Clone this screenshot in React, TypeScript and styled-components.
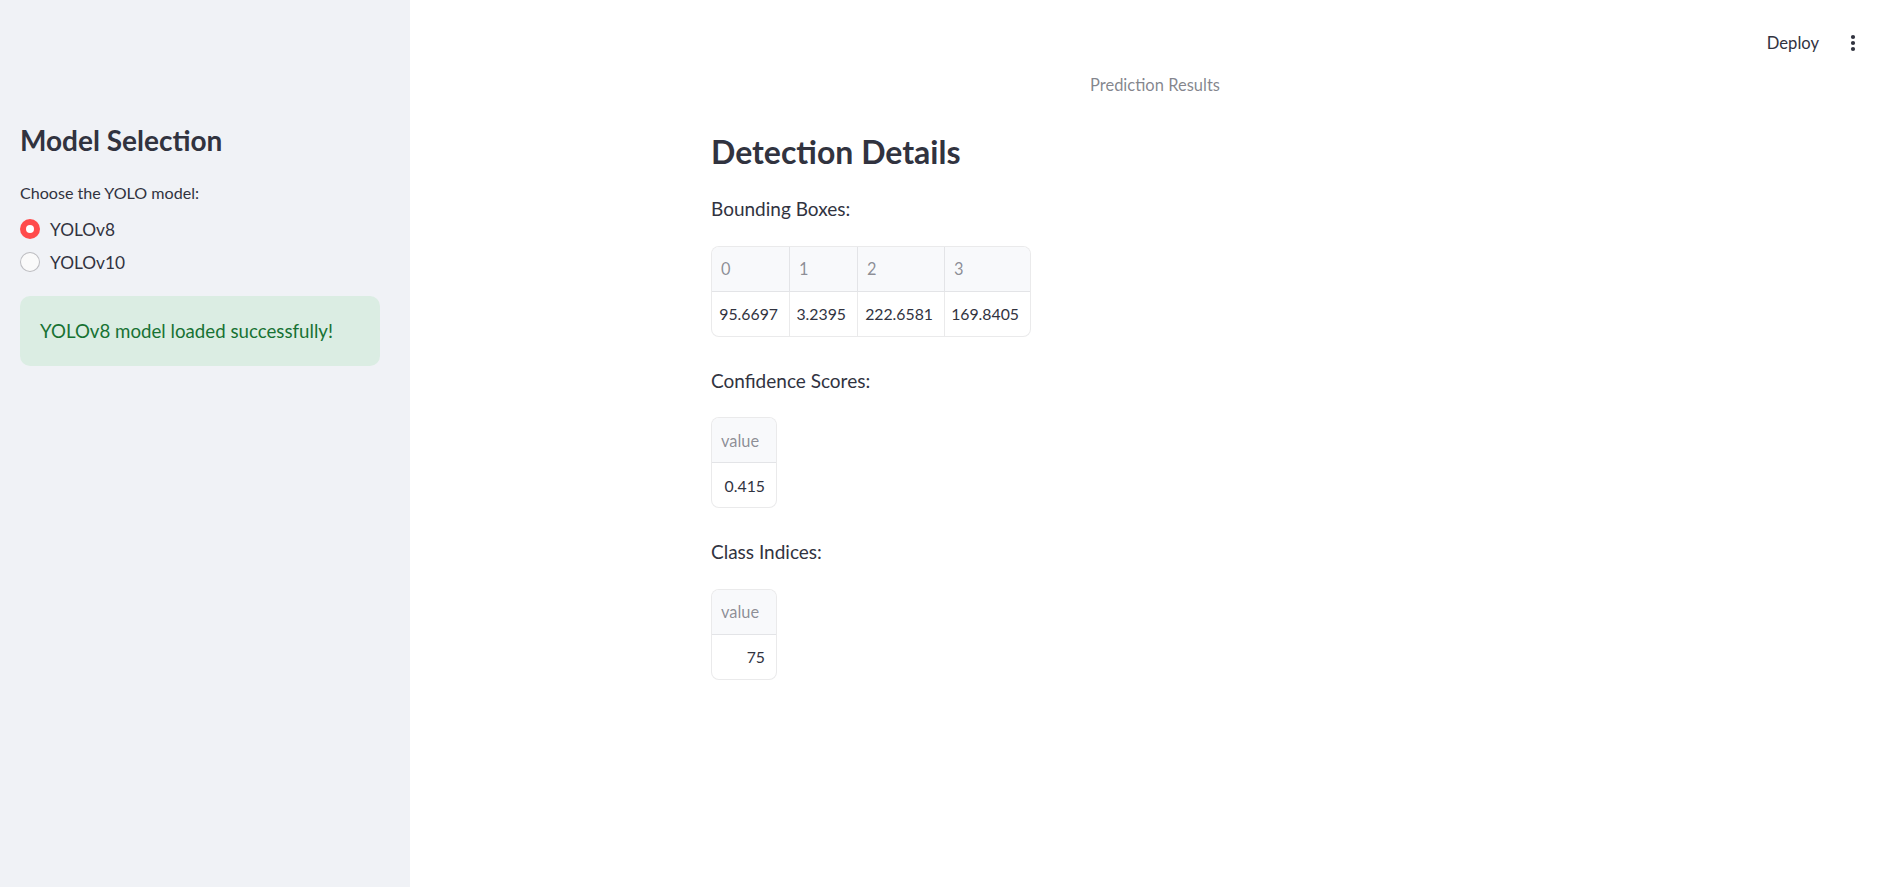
import React from "react";
import styled, { createGlobalStyle } from "styled-components";

const FONT = `"Source Sans Pro", Lato, "Noto Sans", sans-serif`;

const Global = createGlobalStyle`
  html, body { margin: 0; padding: 0; background: #ffffff; }
  body { font-family: ${FONT}; color: #31333f; -webkit-font-smoothing: antialiased; }
  * { box-sizing: border-box; }
`;

const Shell = styled.div`
  display: flex;
  min-height: 887px;
`;

const Sidebar = styled.aside`
  width: 410px;
  flex: 0 0 410px;
  background: #f0f2f6;
  padding: 124px 30px 0 20px;
  display: flex;
  flex-direction: column;
`;

const SideHeading = styled.h2`
  margin: 0;
  font-size: 28px;
  line-height: 1.2;
  font-weight: 700;
  color: #31333f;
`;

const FieldLabel = styled.div`
  margin-top: 22px;
  font-size: 16.1px;
  line-height: 1.6;
  color: #31333f;
`;

const RadioGroup = styled.div`
  margin-top: 10px;
  display: flex;
  flex-direction: column;
  gap: 5px;
`;

const RadioRow = styled.label`
  display: flex;
  align-items: center;
  height: 28px;
  gap: 10px;
  font-size: 17.3px;
  color: #31333f;
  cursor: pointer;
`;

const RadioDot = styled.span<{ $checked?: boolean }>`
  width: 20px;
  height: 20px;
  border-radius: 50%;
  flex: 0 0 20px;
  background: ${(p) => (p.$checked ? "#ff4b4b" : "#fafafa")};
  border: ${(p) => (p.$checked ? "none" : "1px solid rgba(49,51,63,0.3)")};
  display: flex;
  align-items: center;
  justify-content: center;
  &::after {
    content: "";
    display: ${(p) => (p.$checked ? "block" : "none")};
    width: 8px;
    height: 8px;
    border-radius: 50%;
    background: #ffffff;
  }
`;

const SuccessBox = styled.div`
  margin-top: 20px;
  height: 70px;
  border-radius: 10px;
  background: #dbede3;
  color: #177233;
  padding: 0 20px;
  display: flex;
  align-items: center;
  font-size: 18.7px;
`;

const Main = styled.main`
  flex: 1;
  display: flex;
  flex-direction: column;
`;

const Toolbar = styled.header`
  height: 68px;
  padding: 18px 30px 0 0;
  display: flex;
  justify-content: flex-end;
  align-items: center;
  gap: 17px;
`;

const DeployButton = styled.button`
  border: none;
  background: transparent;
  font-family: ${FONT};
  font-size: 16.6px;
  color: #31333f;
  padding: 0;
  cursor: pointer;
`;

const MenuButton = styled.button`
  border: none;
  background: transparent;
  padding: 0;
  width: 34px;
  height: 34px;
  display: flex;
  align-items: center;
  justify-content: center;
  cursor: pointer;
`;

const Content = styled.div`
  width: 888px;
  margin: 0 auto;
  display: flex;
  flex-direction: column;
  align-items: flex-start;
`;

const Caption = styled.div`
  margin-top: 4px;
  align-self: stretch;
  text-align: center;
  font-size: 16.5px;
  line-height: 27px;
  color: rgba(49, 51, 63, 0.6);
`;

const MainHeading = styled.h3`
  margin: 34px 0 0 0;
  font-size: 32px;
  line-height: 1.2;
  font-weight: 700;
  color: #31333f;
`;

const SectionLabel = styled.p<{ $first?: boolean }>`
  margin: ${(p) => (p.$first ? "23px" : "29px")} 0 21px 0;
  font-size: 19px;
  line-height: 30.4px;
  color: #31333f;
`;

const Grid = styled.div<{ $cols: string }>`
  display: grid;
  grid-template-columns: ${(p) => p.$cols};
  border: 1px solid rgba(49, 51, 63, 0.1);
  border-radius: 8px;
  overflow: hidden;
  background: #ffffff;
`;

const HeadCell = styled.div<{ $last?: boolean }>`
  height: 45px;
  background: #f8f9fb;
  border-bottom: 1px solid rgba(49, 51, 63, 0.1);
  border-right: ${(p) => (p.$last ? "none" : "1px solid rgba(49,51,63,0.1)")};
  display: flex;
  align-items: center;
  padding-left: 9px;
  font-size: 16.4px;
  color: rgba(49, 51, 63, 0.55);
`;

const BodyCell = styled.div<{ $last?: boolean }>`
  height: 44px;
  border-right: ${(p) => (p.$last ? "none" : "1px solid rgba(49,51,63,0.1)")};
  display: flex;
  align-items: center;
  justify-content: flex-end;
  padding-right: 11px;
  font-size: 15.8px;
  color: #31333f;
`;

type TableProps = { headers: string[]; values: string[]; widths: number[] };

const DataTable = ({ headers, values, widths }: TableProps) => (
  <Grid $cols={widths.map((w) => `${w}px`).join(" ")}>
    {headers.map((h, i) => (
      <HeadCell key={"h" + i} $last={i === headers.length - 1}>
        {h}
      </HeadCell>
    ))}
    {values.map((v, i) => (
      <BodyCell key={"v" + i} $last={i === values.length - 1}>
        {v}
      </BodyCell>
    ))}
  </Grid>
);

const Kebab = () => (
  <svg width="6" height="18" viewBox="0 0 6 18">
    <circle cx="3" cy="3" r="2.1" fill="#31333f" />
    <circle cx="3" cy="9" r="2.1" fill="#31333f" />
    <circle cx="3" cy="15" r="2.1" fill="#31333f" />
  </svg>
);

export default function App() {
  return (
    <>
      <Global />
      <Shell>
        <Sidebar>
          <SideHeading>Model Selection</SideHeading>
          <FieldLabel>Choose the YOLO model:</FieldLabel>
          <RadioGroup>
            <RadioRow>
              <RadioDot $checked />
              YOLOv8
            </RadioRow>
            <RadioRow>
              <RadioDot />
              YOLOv10
            </RadioRow>
          </RadioGroup>
          <SuccessBox>YOLOv8 model loaded successfully!</SuccessBox>
        </Sidebar>
        <Main>
          <Toolbar>
            <DeployButton>Deploy</DeployButton>
            <MenuButton aria-label="menu">
              <Kebab />
            </MenuButton>
          </Toolbar>
          <Content>
            <Caption>Prediction Results</Caption>
            <MainHeading>Detection Details</MainHeading>
            <SectionLabel $first>Bounding Boxes:</SectionLabel>
            <DataTable
              headers={["0", "1", "2", "3"]}
              values={["95.6697", "3.2395", "222.6581", "169.8405"]}
              widths={[78, 68, 87, 85]}
            />
            <SectionLabel>Confidence Scores:</SectionLabel>
            <DataTable headers={["value"]} values={["0.415"]} widths={[64]} />
            <SectionLabel>Class Indices:</SectionLabel>
            <DataTable headers={["value"]} values={["75"]} widths={[64]} />
          </Content>
        </Main>
      </Shell>
    </>
  );
}
